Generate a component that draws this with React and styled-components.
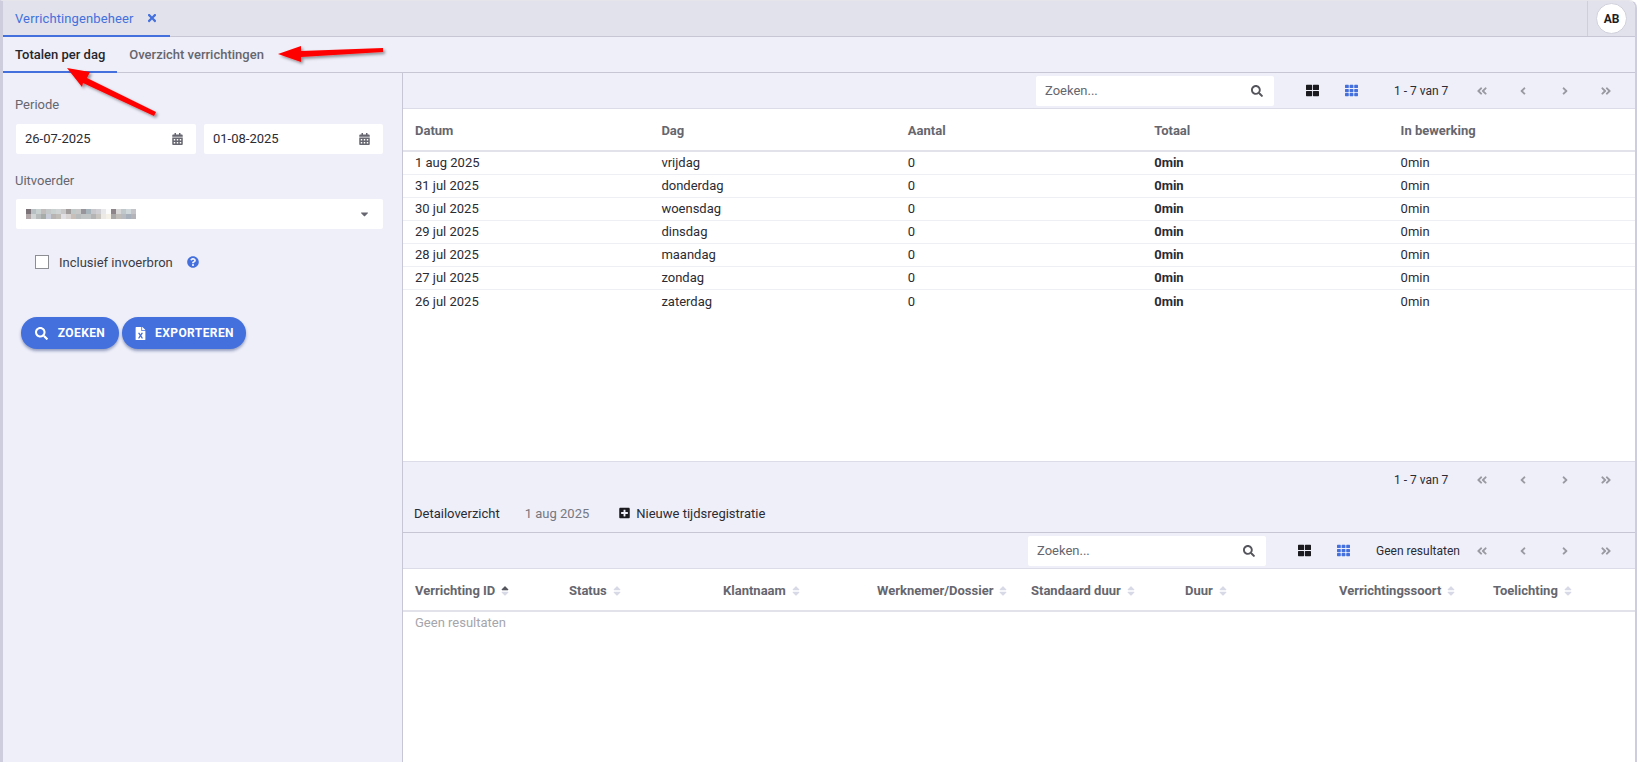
import React from 'react'
import styled, { createGlobalStyle } from 'styled-components'
import {
  FaAngleDoubleLeft,
  FaAngleDoubleRight,
  FaAngleLeft,
  FaAngleRight,
  FaCalendarAlt,
  FaCaretDown,
  FaFileExcel,
  FaPlusSquare,
  FaQuestionCircle,
  FaSearch,
  FaSort,
  FaSortUp,
  FaTh,
  FaThLarge,
  FaTimes
} from 'react-icons/fa'

const Global = createGlobalStyle`
  html, body {
    margin: 0;
    padding: 0;
    height: 100%;
    overflow: hidden;
    background: #fff;
  }
  body {
    font-family: Roboto, "Liberation Sans", sans-serif;
    font-size: 13px;
    color: #2b2b33;
  }
  * {
    box-sizing: border-box;
  }
`

const Page = styled.div`
  position: relative;
  width: 1637px;
  height: 762px;
  display: flex;
  flex-direction: column;
  border-left: 3px solid #cdcddd;
  border-right: 2px solid #cdcddd;
  border-top: 1px solid #e6e6ea;
  border-top-right-radius: 8px;
  overflow: hidden;
`

const TabStrip = styled.div`
  height: 36px;
  flex: none;
  display: flex;
  justify-content: space-between;
  background: #e1e2eb;
  border-bottom: 1px solid #c6c6d4;
`

const AppTab = styled.div`
  width: 167px;
  height: 36px;
  padding-left: 12px;
  display: flex;
  align-items: center;
  gap: 13px;
  letter-spacing: 0.12px;
  color: #4470dd;
  border-bottom: 2px solid #4470dd;
  svg {
    width: 10px;
    height: 12px;
  }
`

const UserCell = styled.div`
  width: 48px;
  display: flex;
  align-items: center;
  padding-left: 8px;
  border-left: 1px solid #cfcfdb;
`

const Avatar = styled.div`
  width: 31px;
  height: 31px;
  border-radius: 50%;
  background: #fff;
  border: 1px solid #d0d0dc;
  display: flex;
  align-items: center;
  justify-content: center;
  font-size: 12px;
  font-weight: 700;
  color: #1d1d22;
`

const SubTabs = styled.div`
  height: 36px;
  flex: none;
  display: flex;
  background: #eeeff9;
  border-bottom: 1px solid #c6c6d4;
`

const SubTab = styled.div`
  height: 36px;
  padding: 0 12px;
  display: flex;
  align-items: center;
  font-weight: 500;
  color: ${p => (p.$active ? '#26262c' : '#66666e')};
  border-bottom: 2px solid ${p => (p.$active ? '#4470dd' : 'transparent')};
`

const Main = styled.div`
  flex: 1;
  min-height: 0;
  display: flex;
`

const Sidebar = styled.div`
  width: 400px;
  flex: none;
  padding: 24px 19px 0 13px;
  background: #eeeff9;
  border-right: 1px solid #c6c6d4;
`

const FieldLabel = styled.div`
  height: 16px;
  line-height: 16px;
  margin: 0 0 10px -1px;
  color: #66666e;
`

const DateRow = styled.div`
  display: grid;
  grid-template-columns: 180px 179px;
  gap: 8px;
  padding-top: 1px;
  margin-bottom: 19px;
`

const InputBox = styled.div`
  height: 30px;
  padding: 0 13px 1px 9px;
  background: #fff;
  border-radius: 2px;
  display: flex;
  align-items: center;
  justify-content: space-between;
  color: #2b2b33;
  svg:last-child {
    width: 11px;
    height: 12px;
    color: #666670;
  }
`

const CheckRow = styled.div`
  margin: 25px 0 0 19px;
  display: flex;
  align-items: center;
  height: 16px;
  color: #3c3c44;
`

const CheckBox = styled.span`
  width: 14px;
  height: 14px;
  margin-right: 10px;
  background: #fff;
  border: 1px solid #8d8d94;
`

const HelpIcon = styled(FaQuestionCircle)`
  width: 12px;
  height: 12px;
  margin-left: 14px;
  color: #4470dd;
`

const Buttons = styled.div`
  display: flex;
  gap: 3px;
  margin: 47px 0 0 5px;
`

const Button = styled.div`
  width: ${p => p.$width}px;
  height: 32px;
  display: flex;
  align-items: center;
  justify-content: center;
  gap: ${p => p.$gap}px;
  border-radius: 16px;
  background: #4470dd;
  color: #fff;
  font-size: 12px;
  font-weight: 700;
  letter-spacing: 0.4px;
  box-shadow: 0 2px 3px rgba(40, 60, 120, 0.45);
  svg {
    width: 13px;
    height: 13px;
  }
`

const Content = styled.div`
  flex: 1;
  min-width: 0;
  display: flex;
  flex-direction: column;
`

const Toolbar = styled.div`
  height: 36px;
  flex: none;
  display: flex;
  align-items: center;
  padding-right: 8px;
  background: #eeeff9;
  border-bottom: 1px solid #dcdce8;
`

const SearchBox = styled.div`
  width: 238px;
  height: 30px;
  margin-left: auto;
  padding: 0 11px 0 9px;
  background: #fff;
  border-radius: 2px;
  display: flex;
  align-items: center;
  justify-content: space-between;
  color: #66666e;
  svg {
    width: 12px;
    height: 12px;
    color: #55555d;
  }
`

const ViewIcons = styled.div`
  display: flex;
  align-items: center;
  margin-left: 32px;
  gap: 26px;
  svg {
    width: 13px;
    height: 13px;
    color: #1b1b1f;
  }
  svg + svg {
    color: #4470dd;
  }
`

const PageInfo = styled.div`
  width: ${p => p.$width}px;
  margin-left: ${p => p.$left}px;
  font-size: 12px;
  white-space: nowrap;
  color: #2b2b33;
`

const Pager = styled.div`
  display: grid;
  grid-template-columns: repeat(4, 41.5px);
  justify-items: center;
  svg {
    width: 12px;
    height: 12px;
    color: #9a9aa2;
  }
`

const TableArea = styled.div`
  flex: ${p => (p.$grow ? 1 : 'none')};
  height: ${p => (p.$height ? `${p.$height}px` : 'auto')};
  min-height: 0;
  background: #fff;
  border-bottom: ${p => (p.$grow ? 'none' : '1px solid #dcdce8')};
`

const Row = styled.div`
  display: grid;
  grid-template-columns: repeat(${p => p.$cols}, 1fr);
  height: 23px;
  padding-bottom: 1px;
  align-items: center;
  border-bottom: 1px solid #eeeff5;
  > * {
    padding-left: 12px;
  }
  &:last-child {
    border-bottom: none;
  }
`

const HeadRow = styled(Row)`
  height: ${p => p.$height}px;
  padding: 2px 0 0;
  border-bottom: 2px solid #e2e2ea;
  font-weight: 700;
  color: #66666e;
  &:last-child {
    border-bottom: 2px solid #e2e2ea;
  }
`

const Bold = styled.span`
  font-weight: 700;
`

const SortHead = styled.span`
  display: flex;
  align-items: center;
  gap: 6px;
  white-space: nowrap;
`

const SortWrap = styled.span`
  position: relative;
  width: 8px;
  height: 12px;
  svg {
    position: absolute;
    left: 0;
    top: 0;
    width: 8px;
    height: 12px;
    color: #d8d9e6;
  }
  svg + svg {
    color: #55555d;
  }
`

const Empty = styled.div`
  padding: 3px 12px;
  color: #a5a5ab;
`

const BottomPager = styled.div`
  height: 36px;
  flex: none;
  display: flex;
  align-items: center;
  justify-content: flex-end;
  padding-right: 8px;
  background: #eeeff9;
`

const DetailBar = styled.div`
  height: 35px;
  flex: none;
  display: flex;
  align-items: center;
  padding: 0 0 4px 11px;
  background: #eeeff9;
  border-bottom: 1px solid #c6c6d4;
`

const DetailDate = styled.span`
  margin-left: 25px;
  color: #77777f;
`

const NewLink = styled.span`
  margin-left: 30px;
  display: flex;
  align-items: center;
  gap: 6px;
  svg {
    width: 11px;
    height: 12px;
    color: #1b1b1f;
  }
`

const Mosaic = styled.svg`
  margin-left: 1px;
  flex: none;
`

const Arrows = styled.svg`
  position: absolute;
  left: -3px;
  top: -1px;
  width: 420px;
  height: 130px;
  pointer-events: none;
`

const days = [
  ['1 aug 2025', 'vrijdag'],
  ['31 jul 2025', 'donderdag'],
  ['30 jul 2025', 'woensdag'],
  ['29 jul 2025', 'dinsdag'],
  ['28 jul 2025', 'maandag'],
  ['27 jul 2025', 'zondag'],
  ['26 jul 2025', 'zaterdag']
]

const detailCols = [
  'Verrichting ID',
  'Status',
  'Klantnaam',
  'Werknemer/Dossier',
  'Standaard duur',
  'Duur',
  'Verrichtingssoort',
  'Toelichting'
]

// pixelated name in the select, colours picked from the screenshot
const mosaic = [
  ['#7a7276', '#b8c0c4', '#c8d0d0', '#c0bcbc', '#c4c8c8', '#c8d0d0', '#d0d4d4', '#c8c8c8', '#a09c9c', '#c0c8c8', '#c8c8c8', '#98949c', '#a8b4bc', '#c8c8cc', '#d0d0d4', '#e8e8ea', '#fbfbfb', '#8c8488', '#d8d8d8', '#c0c8cc', '#d0d8dc', '#c4c4c8'],
  ['#b0a8a8', '#d0d4d4', '#b8bcbc', '#a8aca8', '#c8ccd8', '#b8b4b4', '#c0bcb8', '#e0e0e4', '#d8d4d4', '#c8c0b8', '#b8bcbc', '#c0c4c4', '#c0c4c4', '#b4b4b4', '#c8c4c0', '#ece8e4', '#f4f0e8', '#a8a8a8', '#c0bcb8', '#b8bcc0', '#a8b0bc', '#b4b4b8']
]

const Censored = () => (
  <Mosaic width="110" height="10" viewBox="0 0 110 10">
    {mosaic.map((line, y) =>
      line.map((c, x) => (
        <rect key={`${x}-${y}`} x={x * 5} y={y * 5} width="5" height="5" fill={c} />
      ))
    )}
  </Mosaic>
)

const PagerIcons = () => (
  <Pager>
    <FaAngleDoubleLeft />
    <FaAngleLeft />
    <FaAngleRight />
    <FaAngleDoubleRight />
  </Pager>
)

const Search = () => (
  <SearchBox>
    Zoeken...
    <FaSearch />
  </SearchBox>
)

const App = () => (
  <Page>
    <Global />
    <TabStrip>
      <AppTab>
        Verrichtingenbeheer
        <FaTimes />
      </AppTab>
      <UserCell>
        <Avatar>AB</Avatar>
      </UserCell>
    </TabStrip>
    <SubTabs>
      <SubTab $active>Totalen per dag</SubTab>
      <SubTab>Overzicht verrichtingen</SubTab>
    </SubTabs>
    <Main>
      <Sidebar>
        <FieldLabel>Periode</FieldLabel>
        <DateRow>
          <InputBox>
            26-07-2025
            <FaCalendarAlt />
          </InputBox>
          <InputBox>
            01-08-2025
            <FaCalendarAlt />
          </InputBox>
        </DateRow>
        <FieldLabel>Uitvoerder</FieldLabel>
        <InputBox>
          <Censored />
          <FaCaretDown />
        </InputBox>
        <CheckRow>
          <CheckBox />
          Inclusief invoerbron
          <HelpIcon />
        </CheckRow>
        <Buttons>
          <Button $width={98} $gap={10}>
            <FaSearch />
            ZOEKEN
          </Button>
          <Button $width={124} $gap={8}>
            <FaFileExcel />
            EXPORTEREN
          </Button>
        </Buttons>
      </Sidebar>
      <Content>
        <Toolbar>
          <Search />
          <ViewIcons>
            <FaThLarge />
            <FaTh />
          </ViewIcons>
          <PageInfo $width={67} $left={36}>1 - 7 van 7</PageInfo>
          <PagerIcons />
        </Toolbar>
        <TableArea $height={353}>
          <HeadRow $cols={5} $height={43}>
            <span>Datum</span>
            <span>Dag</span>
            <span>Aantal</span>
            <span>Totaal</span>
            <span>In bewerking</span>
          </HeadRow>
          {days.map(([date, day]) => (
            <Row $cols={5} key={date}>
              <span>{date}</span>
              <span>{day}</span>
              <span>0</span>
              <Bold>0min</Bold>
              <span>0min</span>
            </Row>
          ))}
        </TableArea>
        <BottomPager>
          <PageInfo $width={67} $left={0}>1 - 7 van 7</PageInfo>
          <PagerIcons />
        </BottomPager>
        <DetailBar>
          Detailoverzicht
          <DetailDate>1 aug 2025</DetailDate>
          <NewLink>
            <FaPlusSquare />
            Nieuwe tijdsregistratie
          </NewLink>
        </DetailBar>
        <Toolbar>
          <Search />
          <ViewIcons>
            <FaThLarge />
            <FaTh />
          </ViewIcons>
          <PageInfo $width={85} $left={26}>Geen resultaten</PageInfo>
          <PagerIcons />
        </Toolbar>
        <TableArea $grow>
          <HeadRow $cols={8} $height={43}>
            {detailCols.map((name, i) => (
              <SortHead key={name}>
                {name}
                <SortWrap>
                  <FaSort />
                  {i === 0 && <FaSortUp />}
                </SortWrap>
              </SortHead>
            ))}
          </HeadRow>
          <Empty>Geen resultaten</Empty>
        </TableArea>
      </Content>
    </Main>
    <Arrows viewBox="0 0 420 130">
      <defs>
        <filter id="arrowShadow" x="-10%" y="-20%" width="130%" height="150%">
          <feDropShadow dx="2" dy="2" stdDeviation="1.5" floodColor="#000" floodOpacity="0.4" />
        </filter>
      </defs>
      <g fill="#f00" filter="url(#arrowShadow)">
        <path d="M278 54 L301 46 L301 51 L383 48 L383 52 L301 57 L301 62 Z" />
        <path d="M67 68 L90 72 L87 78 L156 112 L154 116 L83 83 L82 87 Z" />
      </g>
    </Arrows>
  </Page>
)

export default App
